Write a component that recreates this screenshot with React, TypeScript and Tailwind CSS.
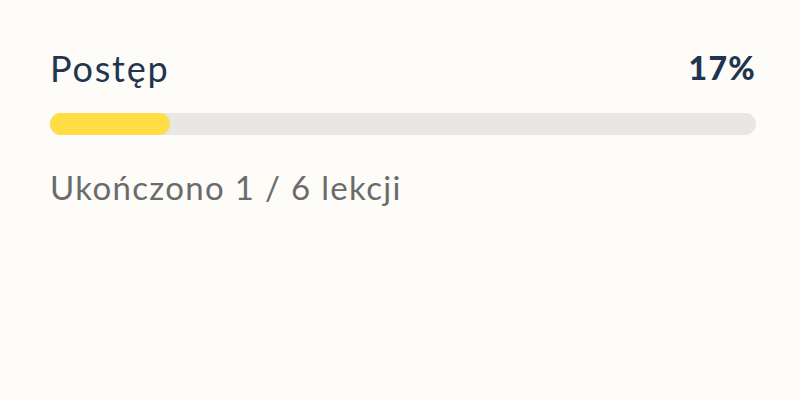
import React from 'react';

function App() {
  const done = 1;
  const total = 6;
  const percent = Math.round((done / total) * 100);

  return (
    <div className="min-h-screen w-full bg-[#fdfcf8] pl-[50px] pr-[44px] pt-[46px]" style={{ fontFamily: 'Lato, "Noto Sans", sans-serif' }}>
      <div className="flex items-center justify-between">
        <h2 className="text-[36px] font-normal leading-[44px] tracking-[0.05em] text-[#1f3550]">Postęp</h2>
        <span className="text-[32px] font-black leading-[44px] tracking-[0.04em] text-[#1f3550]">{percent}%</span>
      </div>
      <div className="mt-[23px] h-[22px] w-full rounded-full bg-[#e9e7e3]">
        <div className="h-full rounded-full bg-[#ffdd44]" style={{ width: `${percent}%` }} />
      </div>
      <p className="mt-[30px] text-[33px] font-normal leading-[44px] tracking-[0.04em] text-[#6b6b6b]">
        Ukończono {done} / {total} lekcji
      </p>
    </div>
  );
}

export default App;
